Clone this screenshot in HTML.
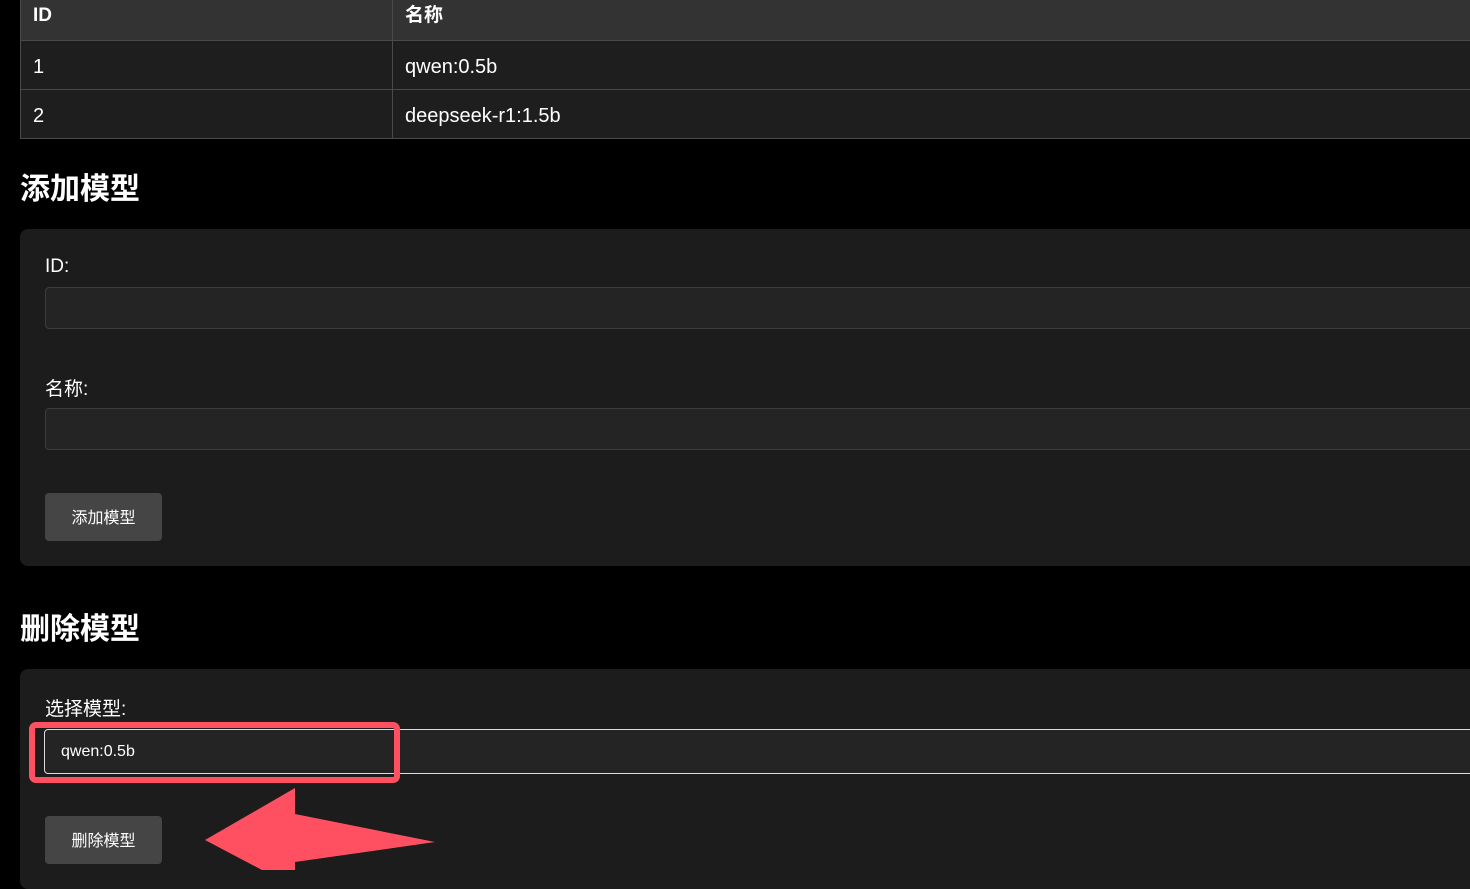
<!DOCTYPE html>
<html><head><meta charset="utf-8"><style>
body{margin:0;background:#000;width:1470px;height:870px;overflow:hidden;font-family:"Liberation Sans","Noto Sans CJK SC",sans-serif;color:#fff;position:relative}
.a{position:absolute}
table{position:absolute;left:20px;top:-2px;width:1460px;border-collapse:collapse;font-size:20px;table-layout:fixed}
td,th{border:1px solid #4a4a4a;padding:0 12px;text-align:left;height:48px;line-height:48px;vertical-align:top;box-sizing:border-box}
th{background:#333;height:42px;line-height:33px;font-weight:bold;font-size:19px}
td{background:#1e1e1e;height:49px}
td span{position:relative;top:2px}
h2{position:absolute;left:20px;margin:0;font-size:30px;font-weight:bold}
.panel{position:absolute;left:20px;width:1470px;background:#1c1c1c;border-radius:8px}
.lbl{position:absolute;left:45px;font-size:19px}
.inp{position:absolute;left:45px;width:1440px;height:40px;background:#242424;border:1px solid #3c3c3c;border-radius:4px;box-sizing:border-box}
.btn{position:absolute;left:45px;width:117px;height:48px;background:#454545;border-radius:4px;font-size:16px;text-align:center;line-height:52px}
</style></head><body>
<table><colgroup><col style="width:372px"><col></colgroup><tr><th>ID</th><th>名称</th></tr>
<tr><td><span>1</span></td><td><span>qwen:0.5b</span></td></tr>
<tr><td><span>2</span></td><td><span>deepseek-r1:1.5b</span></td></tr></table>
<h2 style="top:164px">添加模型</h2>
<div class="panel" style="top:229px;height:337px"></div>
<div class="lbl" style="top:256px">ID:</div>
<div class="inp" style="top:287px;height:42px"></div>
<div class="lbl" style="top:374px">名称:</div>
<div class="inp" style="top:408px;height:42px"></div>
<div class="btn" style="top:493px">添加模型</div>
<h2 style="top:604px">删除模型</h2>
<div class="panel" style="top:669px;height:220px"></div>
<div class="lbl" style="top:694px">选择模型:</div>
<div class="a" style="left:44px;top:729px;width:1440px;height:45px;border:1px solid #ddd;border-radius:4px;background:#242424;box-sizing:border-box"></div>
<div class="a" style="left:61px;top:743px;font-size:16px">qwen:0.5b</div>
<div class="a" style="left:29px;top:722px;width:371px;height:61px;border:6px solid #ff5062;border-radius:7px;box-sizing:border-box"></div>
<div class="btn" style="top:816px">删除模型</div>
<svg class="a" style="left:0;top:0" width="1470" height="870"><polygon points="205,840 295,788 295,814 435,842 295,862 295,870 262,870" fill="#ff5062"/></svg>
</body></html>
